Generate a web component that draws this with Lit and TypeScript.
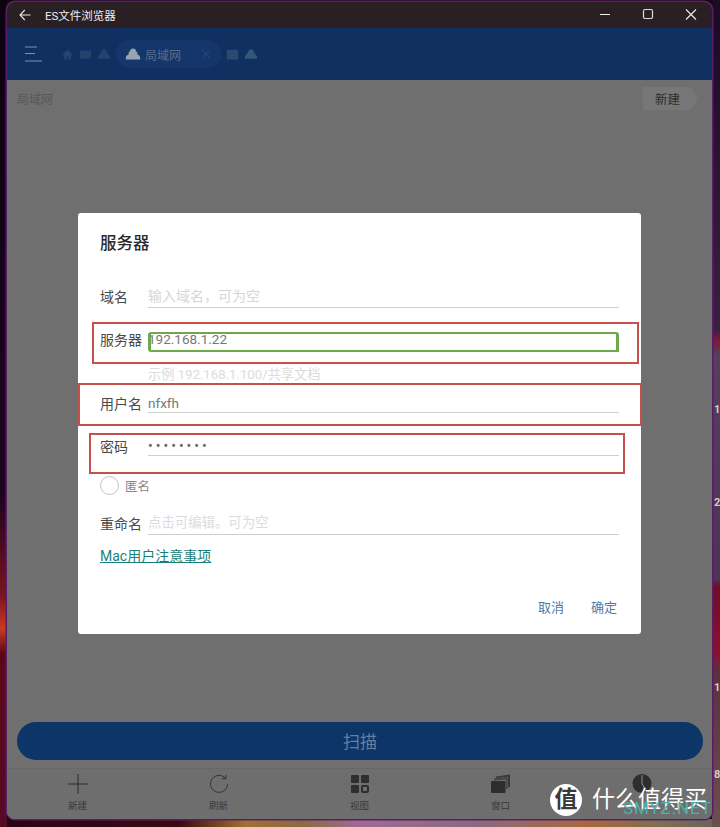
import { LitElement, html, css } from "lit";
import { customElement } from "lit/decorators.js";

@customElement("app-root")
export class AppRoot extends LitElement {
  static styles = css`
    :host { display: block; width: 720px; height: 827px; overflow: hidden; position: relative;
      font-family: Roboto, "Noto Sans CJK SC", "Noto Sans", sans-serif; }
    * { box-sizing: border-box; }
    .desktop { position: relative; width: 720px; height: 827px; padding: 2px 8px 8px 7px; background: #1c0418; overflow: hidden; }
    .wall { position: absolute; left: 0; right: 0; bottom: 0; height: 8px;
      background: linear-gradient(90deg, #2a0414 0, #3a0a12 25%, #a07030 34%, #8a6a40 42%, #a06a90 50%, #8a6a80 66%, #a8683c 82%, #7a7050 92%, #6a6060 100%); }
    .wallL { position: absolute; left: 0; top: 0; bottom: 0; width: 7px;
      background: linear-gradient(180deg, #0c0210 0, #1c0420 60%, #7a1420 72%, #c83c20 76%, #5a0818 79%, #560a24 100%); }
    .wallR { position: absolute; right: 0; top: 0; bottom: 0; width: 8px;
      background: linear-gradient(180deg, #1a0a24 0, #3a2040 40%, #7a1838 41%, #54405c 43%, #4a3458 70%, #700c28 71%, #8c1030 79%, #5a3040 81%, #6a5050 100%); }
    .tick { position: absolute; right: 0; width: 6px; color: #d8c8c0; font-size: 11px; line-height: 12px; font-weight: 700; overflow: hidden; }
    .window { position: relative; width: 705px; height: 817px; border-radius: 8px; overflow: hidden;
      display: flex; flex-direction: column; background: #6f6f6f; box-shadow: 0 0 0 1.5px #5a1c68; }
    .title { height: 26px; background: #2a2023; display: flex; align-items: center; color: #eee; font-size: 11.5px; padding: 0 0 0 12px; flex: none; }
    .title .t { margin-left: 14px; }
    .title .ctl { margin-left: auto; display: flex; align-items: center; }
    .title .ctl svg { display: block; width: 43px; height: 26px; }
    .bar { height: 52px; background: #0f3060; flex: none; display: flex; align-items: center; padding: 0 0 0 17px; }
    .crumbs { display: flex; align-items: center; margin-left: 18px; gap: 5px; }
    .crumbs svg { display: block; }
    .chip { display: flex; align-items: center; height: 28px; width: 105px; padding: 0 9px 0 9px; background: #15366a; border-radius: 14px; color: #566e8c; font-size: 12px; gap: 4px; }
    .chip .x { margin-left: auto; }
    .content { flex: 1; min-height: 0; display: flex; flex-direction: column; background: #6f6f6f; }
    .sub { height: 37px; display: flex; align-items: center; justify-content: space-between; padding: 0 14px 0 10px; font-size: 12px; color: #585858; flex: none; }
    .newbtn { width: 55px; height: 23px; background: #777; clip-path: polygon(0 0, 86% 0, 100% 50%, 86% 100%, 0 100%); display: flex; align-items: center; padding-left: 12px; color: #2c2c2c; font-size: 12.5px; }
    .spacer { flex: 1; }
    .scan { margin: 0 9px 0 10px; height: 38px; border-radius: 19px; background: #0e3568; color: #64809f; display: flex; align-items: center; justify-content: center; font-size: 17px; padding-bottom: 2px; flex: none; }
    .nav { height: 51px; margin-top: 8px; border-top: 1px solid #686868; display: grid; grid-template-columns: repeat(5, 141px); flex: none; background: #6e6e6e; }
    .nav > div { display: flex; flex-direction: column; align-items: center; padding-top: 4px; color: #3a3a3a; font-size: 9.5px; line-height: 12px; gap: 5px; }
    .nav svg { display: block; width: 22px; height: 22px; }

    .dialog { position: absolute; left: 78px; top: 213px; width: 563px; height: 421px; background: #fff; border-radius: 3px;
      padding: 19px 22px 0 22px; display: flex; flex-direction: column; }
    .dialog h2 { margin: 0; font-size: 16.5px; font-weight: 500; color: #2a2a2a; line-height: 24px; }
    .row { display: flex; align-items: flex-end; height: 24px; font-size: 14px; color: #4a4a4a; }
    .row .lab { width: 48px; flex: none; line-height: 22px; }
    .field { flex: 1; height: 24px; padding-top: 2px; border-bottom: 1px solid #cfcfcf; font-size: 13.5px; line-height: 20px; color: #777; }
    .ph { color: #d6d6d6; font-size: 14px; }
    .r1 { margin-top: 28px; }
    .r2 { margin-top: 19px; }
    .r2 .field { border: 0; }
    .hint { margin: 14px 0 0 48px; height: 20px; font-size: 13.2px; line-height: 20px; color: #dcdcdc; }
    .r3 { margin-top: 4px; }
    .r4 { margin-top: 19px; }
    .r3 .lab, .r4 .lab { margin-bottom: -2px; }
    .r3 .field, .r4 .field { padding-top: 4px; }
    .pw { font-size: 14px; letter-spacing: 3px; color: #666; }
    .anon { display: flex; align-items: center; margin-top: 19px; height: 20px; font-size: 12.5px; color: #888; gap: 6px; }
    .radio { width: 19px; height: 19px; border-radius: 50%; border: 1px solid #c4c4c4; flex: none; }
    .r5 { margin-top: 16px; }
    .r5 .ph { color: #dcdcdc; font-size: 13.4px; }
    .mac { margin-top: 12px; font-size: 14px; line-height: 18px; color: #1a7f7a; text-decoration: underline; }
    .actions { margin-top: auto; margin-bottom: 17px; display: flex; justify-content: flex-end; gap: 27px; padding-right: 2px; font-size: 13px; color: #4f7aa6; line-height: 18px; }

    .mark { position: absolute; border: 2px solid #c8504c; }
    .m1 { left: 92px; top: 322px; width: 547px; height: 42px; }
    .m2 { left: 78px; top: 383px; width: 564px; height: 43px; }
    .m3 { left: 89px; top: 433px; width: 536px; height: 41px; }
    .green { position: absolute; left: 148px; top: 332px; width: 471px; height: 20px; border: 2px solid #6fa84a; border-left-width: 3px; border-right-width: 3px; border-radius: 3px 3px 0 3px; }

    .wm { position: absolute; left: 550px; top: 784px; display: flex; align-items: center; gap: 10px; color: #fff; font-size: 23px; line-height: 32px; }
    .wm .logo { width: 32px; height: 32px; border-radius: 50%; background: #fff; color: #3a3a3a; display: flex; align-items: center; justify-content: center; font-size: 23px; font-weight: 700; }
    .wm .net { position: absolute; left: 73px; top: 13px; color: #4fb0ac; font-size: 17px; line-height: 22px; letter-spacing: 0.9px; font-family: Roboto, sans-serif; }
  `;

  private cloud(c: string, w = 14, h = w) {
    return html`<svg width=${w} height=${h} viewBox="0 0 16 14"><path fill=${c} d="M8 1.5C6.2 1.5 5 2.8 4.8 4.4L3.6 5.6V7.4C2 8 .8 9.2.8 11V12.5H15.2V11C15.2 9.2 14 8 12.4 7.4V5.6L11.2 4.4C11 2.8 9.8 1.5 8 1.5Z"/></svg>`;
  }

  render() {
    return html`
      <div class="desktop">
        <div class="wall"></div><div class="wallL"></div><div class="wallR"></div>
        <span class="tick" style="top:404px">1</span>
        <span class="tick" style="top:497px">2</span>
        <span class="tick" style="top:682px">1</span>
        <span class="tick" style="top:769px">8</span>
        <div class="window">
          <div class="title">
            <svg width="12" height="12" viewBox="0 0 12 12" fill="none" stroke="#e8e8e8" stroke-width="1.1"><path d="M11.5 6H1M5.8 1L1 6L5.8 11"/></svg>
            <span class="t">ES文件浏览器</span>
            <div class="ctl">
              <svg viewBox="0 0 43 26" fill="none" stroke="#eee" stroke-width="1.1"><path d="M17 12.5H27"/></svg>
              <svg viewBox="0 0 43 26" fill="none" stroke="#ddd" stroke-width="1.2"><rect x="17.5" y="7.5" width="9" height="9" rx="1.5"/></svg>
              <svg viewBox="0 0 43 26" fill="none" stroke="#eee" stroke-width="1.1"><path d="M17 7.5L27 17.5M27 7.5L17 17.5"/></svg>
            </div>
          </div>
          <div class="bar">
            <svg width="19" height="16" viewBox="0 0 19 16" fill="none" stroke="#7d93ad" stroke-width="1"><path d="M1 1H13M1 7.5H11M1 15H18"/></svg>
            <div class="crumbs">
              <svg width="13" height="13" viewBox="0 0 16 16"><path fill="#24466e" d="M8 2L2 8V9H4V14H7V10H9V14H12V9H14V8Z"/></svg>
              <svg width="13" height="13" viewBox="0 0 16 16"><rect x="1" y="3" width="14" height="10" rx="1" fill="#24426c"/></svg>
              ${this.cloud("#24426c", 14, 12)}
              <div class="chip">
                ${this.cloud("#98a4b4", 16, 14)}<span>局域网</span>
                <svg class="x" width="12" height="12" viewBox="0 0 12 12" fill="none" stroke="#274872" stroke-width="1"><path d="M2 2L10 10M10 2L2 10"/></svg>
              </div>
              <svg width="13" height="13" viewBox="0 0 16 16"><rect x="1" y="2" width="14" height="12" rx="1" fill="#2a4a72"/></svg>
              ${this.cloud("#33587a", 14, 12)}
            </div>
          </div>
          <div class="content">
            <div class="sub"><span>局域网</span><div class="newbtn">新建</div></div>
            <div class="spacer"></div>
            <div class="scan">扫描</div>
            <div class="nav">
              <div><svg viewBox="0 0 22 22" fill="none" stroke="#2a2a2a" stroke-width="1"><path d="M11 1V21M1 11H21"/></svg>新建</div>
              <div><svg viewBox="0 0 22 22" fill="none" stroke="#333" stroke-width="1"><path d="M17.6 5.5A8.5 8.5 0 1 0 19.5 11"/><path d="M14 5.7H18V2"/></svg>刷新</div>
              <div><svg viewBox="0 0 22 22" fill="#2e2e2e"><rect x="2" y="2" width="8" height="8" rx="1"/><rect x="12" y="2" width="8" height="8" rx="1"/><rect x="2" y="12" width="8" height="8" rx="1"/><rect x="13" y="13" width="6" height="6" rx="1" fill="none" stroke="#2e2e2e" stroke-width="2"/></svg>视图</div>
              <div><svg viewBox="0 0 22 22"><path fill="#383838" d="M6 3.5L20 1.5V14L18 14.5V3.8L6 5Z"/><path fill="#444" d="M4 5.5L17.5 4V16H16V6.5L4 7.5Z"/><rect x="1" y="8" width="14.5" height="12" rx="1" fill="#2e2e2e"/></svg>窗口</div>
              <div><svg viewBox="0 0 22 22"><circle cx="11" cy="10.5" r="9.5" fill="#2e2e2e"/><path d="M11 2V10.5L14 16" stroke="#aaa" stroke-width="0.8" fill="none"/></svg></div>
            </div>
          </div>
        </div>

        <div class="dialog">
          <h2>服务器</h2>
          <div class="row r1"><span class="lab">域名</span><div class="field ph">输入域名，可为空</div></div>
          <div class="row r2"><span class="lab">服务器</span><div class="field">192.168.1.22</div></div>
          <div class="hint">示例 192.168.1.100/共享文档</div>
          <div class="row r3"><span class="lab">用户名</span><div class="field">nfxfh</div></div>
          <div class="row r4"><span class="lab">密码</span><div class="field pw">••••••••</div></div>
          <div class="anon"><span class="radio"></span>匿名</div>
          <div class="row r5"><span class="lab">重命名</span><div class="field ph">点击可编辑。可为空</div></div>
          <div class="mac">Mac用户注意事项</div>
          <div class="actions"><span>取消</span><span>确定</span></div>
        </div>
        <div class="green"></div>
        <div class="mark m1"></div>
        <div class="mark m2"></div>
        <div class="mark m3"></div>

        <div class="wm">
          <span class="logo">值</span><span>什么值得买</span><span class="net">SMYZ.NET</span>
        </div>
      </div>
    `;
  }
}
